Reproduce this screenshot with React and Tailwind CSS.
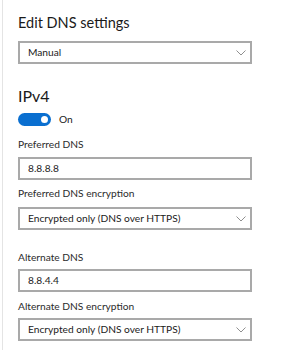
import React from "react"

function Chevron() {
  return (
    <svg width="10" height="6" viewBox="0 0 10 6" className="shrink-0">
      <path d="M0.5 0.5 L5 5 L9.5 0.5" fill="none" stroke="#8f8f8f" strokeWidth="1" />
    </svg>
  )
}

function Select({ value, className = "" }) {
  return (
    <div
      className={`flex h-[23px] w-[234px] items-center justify-between border-2 border-[#a9a9a9] bg-white pl-[8px] pr-[4px] text-[10.2px] text-[#1b1b1b] ${className}`}
    >
      <span>{value}</span>
      <Chevron />
    </div>
  )
}

function Field({ value, className = "" }) {
  return (
    <div
      className={`flex h-[23px] w-[234px] items-center border-2 border-[#a9a9a9] bg-white pl-[8px] text-[10.2px] text-[#1b1b1b] ${className}`}
    >
      {value}
    </div>
  )
}

function Label({ children, className = "" }) {
  return <div className={`h-[16px] text-[10.2px] leading-[16px] text-[#2b2b2b] ${className}`}>{children}</div>
}

export default function App() {
  return (
    <div
      className="h-[350px] w-[284px] overflow-hidden bg-white pl-[2px]"
      style={{ fontFamily: 'Lato, "Noto Sans", sans-serif' }}
    >
      <div className="h-full border-l border-[#e4e4e4] pl-[15px]">
        <div className="pt-[12px] text-[14.5px] leading-[22px] text-[#1a1a1a]">Edit DNS settings</div>
        <Select value="Manual" className="mt-[7px]" />

        <div className="mt-[21px] text-[16px] leading-[22px] text-[#1a1a1a]">IPv4</div>
        <div className="mt-[5px] flex items-center gap-[8px]">
          <div className="flex h-[13px] w-[33px] items-center justify-end rounded-full bg-[#0a6fd0] pr-[3px]">
            <div className="h-[7px] w-[7px] rounded-full bg-white" />
          </div>
          <span className="text-[10.2px] text-[#1b1b1b]">On</span>
        </div>

        <Label className="mt-[9px]">Preferred DNS</Label>
        <Field value="8.8.8.8" className="mt-[5px]" />
        <Label className="mt-[5px]">Preferred DNS encryption</Label>
        <Select value="Encrypted only (DNS over HTTPS)" className="mt-[6px]" />

        <Label className="mt-[19px]">Alternate DNS</Label>
        <Field value="8.8.4.4" className="mt-[4px]" />
        <Label className="mt-[6px]">Alternate DNS encryption</Label>
        <Select value="Encrypted only (DNS over HTTPS)" className="mt-[4px]" />
      </div>
    </div>
  )
}
